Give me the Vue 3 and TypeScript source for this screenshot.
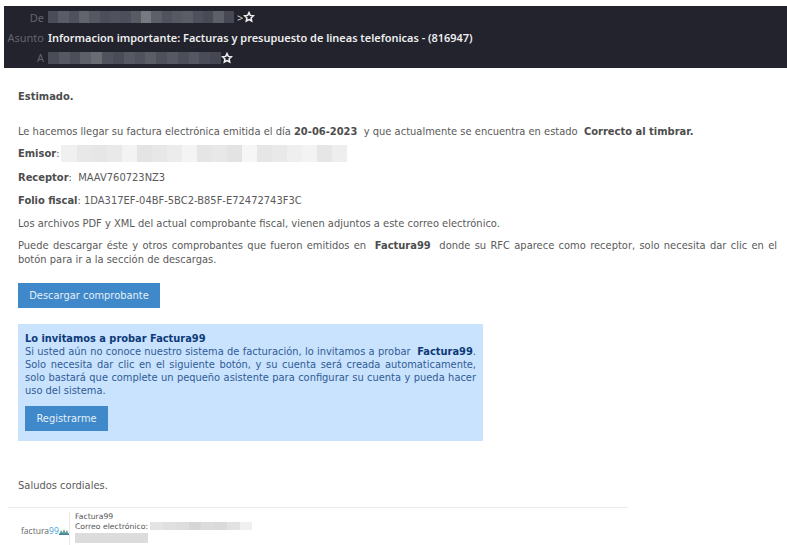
<script setup lang="ts">
const blur = (cols: string[], w: number) => cols.map((c) => ({ c, w: w / cols.length }));
const de = blur(['#4a4d58','#5a5d67','#4f525c','#62646d','#555862','#4c4f59','#50535d','#4d505a','#585a64','#777981','#5c5f68','#50535d','#565862','#5a5c66','#4e515b','#484b55','#5c5e68','#464954'], 186);
const para = blur(['#4a4d58','#565862','#4c4f59','#5d5f69','#6a6c74','#50535d','#4a4d58','#565862','#50535d','#5a5c66','#4e515b','#565862','#4c4f59','#555862','#4a4d58','#454853'], 173);
const emisor = blur(['#f0f0f0','#e8e8e8','#e6e6e6','#e9e9e9','#f3f3f3','#e4e4e4','#e7e7e7','#ececec','#f4f4f4','#e5e5e5','#e8e8e8','#e3e3e3','#f6f6f6','#e6e6e6','#e9e9e9','#efefef','#f3f3f3','#e6e6e6','#eeeeee'], 286);
const correo = blur(['#e4e4e4','#e0e0e0','#dedede','#d6d6d6','#dcdcdc','#dadada','#e2e2e2','#f0f0f0'], 102);
</script>

<template>
  <div class="page">
    <header class="head">
      <div class="hrow">
        <span class="hlabel">De</span>
        <span class="blur"><i v-for="(s, i) in de" :key="i" :style="{ background: s.c, width: s.w + 'px' }"></i></span>
        <span class="gt">&gt;</span>
        <svg class="star" viewBox="0 0 12 12"><path d="M6 1.6 7.3 4.4 10.4 4.8 8.1 6.9 8.7 10 6 8.5 3.3 10 3.9 6.9 1.6 4.8 4.7 4.4Z" /></svg>
      </div>
      <div class="hrow">
        <span class="hlabel">Asunto</span>
        <strong class="subject">Informacion importante: Facturas y presupuesto de lineas telefonicas - (816947)</strong>
      </div>
      <div class="hrow">
        <span class="hlabel">A</span>
        <span class="blur"><i v-for="(s, i) in para" :key="i" :style="{ background: s.c, width: s.w + 'px' }"></i></span>
        <svg class="star" viewBox="0 0 12 12"><path d="M6 1.6 7.3 4.4 10.4 4.8 8.1 6.9 8.7 10 6 8.5 3.3 10 3.9 6.9 1.6 4.8 4.7 4.4Z" /></svg>
      </div>
    </header>

    <main class="mail">
      <p class="greet"><b>Estimado.</b></p>
      <p class="intro">Le hacemos llegar su factura electrónica emitida el día <b>20-06-2023</b>&nbsp; y que actualmente se encuentra en estado&nbsp; <b>Correcto al timbrar.</b></p>
      <p class="line emisor"><b>Emisor</b>:<span class="blur"><i v-for="(s, i) in emisor" :key="i" :style="{ background: s.c, width: s.w + 'px' }"></i></span></p>
      <p class="line"><b>Receptor</b>:&nbsp; MAAV760723NZ3</p>
      <p class="line"><b>Folio fiscal</b>: 1DA317EF-04BF-5BC2-B85F-E72472743F3C</p>
      <p class="line tight">Los archivos PDF y XML del actual comprobante fiscal, vienen adjuntos a este correo electrónico.</p>
      <p class="just">Puede descargar éste y otros comprobantes que fueron emitidos en&nbsp; <b>Factura99</b>&nbsp; donde su RFC aparece como receptor, solo necesita dar clic en el botón para ir a la sección de descargas.</p>
      <a class="btn dl">Descargar comprobante</a>

      <section class="promo">
        <h4>Lo invitamos a probar Factura99</h4>
        <p>Si usted aún no conoce nuestro sistema de facturación, lo invitamos a probar&nbsp; <b>Factura99</b>. Solo necesita dar clic en el siguiente botón, y su cuenta será creada automaticamente, solo bastará que complete un pequeño asistente para configurar su cuenta y pueda hacer uso del sistema.</p>
        <a class="btn reg">Registrarme</a>
      </section>

      <p class="bye">Saludos cordiales.</p>

      <footer class="foot">
        <div class="logo">
          <span>factura<em>99</em></span>
          <svg viewBox="0 0 10 6" width="10" height="6"><path d="M0 6 2 1 3.5 3.5 5 0 6.5 3.5 8 1 10 6Z" fill="#6aa58f" /><path d="M0 6h10V4.5H0Z" fill="#3d7fb5" /></svg>
        </div>
        <div class="sig">
          <div>Factura99</div>
          <div class="cor">Correo electrónico:&nbsp;<span class="blur"><i v-for="(s, i) in correo" :key="i" :style="{ background: s.c, width: s.w + 'px' }"></i></span></div>
          <div class="last"><span class="lastblur"></span></div>
        </div>
      </footer>
    </main>
  </div>
</template>

<style scoped>
.page { width: 787px; height: 545px; overflow: hidden; background: #fff; font-family: "DejaVu Sans", sans-serif; font-size: 9.93px; color: #5a5a5a; box-sizing: border-box; padding-top: 6px; }
.head { margin-left: 4px; height: 62px; background: #22232c; display: flex; flex-direction: column; padding-top: 1px; box-sizing: border-box; font-family: "Noto Sans", sans-serif; }
.hrow { height: 21px; display: flex; align-items: center; }
.hlabel { width: 40px; text-align: right; margin-right: 4px; font-size: 11px; color: #63656e; flex: none; }
.subject { color: #eeeeef; font-size: 10.95px; font-weight: 600; white-space: nowrap; }
.blur { display: inline-flex; height: 12px; vertical-align: middle; }
.blur i { display: block; height: 100%; }
.gt { color: #d0d0d4; font-size: 11px; margin-left: 3px; }
.star { width: 12px; height: 12px; margin-left: 0; fill: none; stroke: #f0f0f2; stroke-width: 1.5; }
.mail { padding: 22px 10px 0 18px; }
p { margin: 0; line-height: 13px; }
b { color: #4d4d4d; }
.greet { margin-bottom: 22px; }
.intro { margin-bottom: 7px; }
.line { margin-bottom: 10px; }
.emisor { height: 17px; margin-bottom: 9px; }
.emisor .blur { height: 17px; margin-left: 2px; }
.tight { margin-bottom: 9px; }
.just { text-align: justify; line-height: 14px; margin-bottom: 16px; }
.btn { display: block; box-sizing: border-box; height: 25px; line-height: 25px; background: #3f88c9; color: #e4f0fa; font-size: 9.9px; text-align: center; white-space: nowrap; }
.dl { width: 142px; }
.promo { margin-top: 16px; width: 465px; height: 117px; box-sizing: border-box; padding: 8px 7px; background: #c9e2fd; color: #2f5c96; font-size: 9.88px; }
.promo h4 { margin: 0; font-size: 9.85px; line-height: 13px; font-weight: 700; color: #0d3a78; }
.promo p { text-align: justify; }
.promo b { color: #0d3a78; }
.reg { margin-top: 9px; width: 83px; }
.bye { margin-top: 38px; }
.foot { margin: 15px 0 0 -10px; width: 620px; border-top: 1px solid #eaeaea; display: flex; padding-top: 4px; font-size: 7.7px; line-height: 10px; color: #555; }
.logo { width: 57px; padding: 14px 0 0 13px; box-sizing: border-box; display: flex; align-items: flex-start; font-family: "Open Sans", sans-serif; font-size: 8.5px; color: #666; white-space: nowrap; flex: none; }
.logo em { font-style: normal; color: #3f9fd8; }
.logo svg { margin: 3px 0 0 0; flex: none; }
.sig { border-left: 1px solid #eaeaea; margin-left: 4px; padding-left: 5px; height: 40px; }
.cor .blur { height: 8px; vertical-align: -1px; }
.lastblur { display: block; width: 73px; height: 10px; background: #dcdcdc; margin-top: 1px; }
</style>
